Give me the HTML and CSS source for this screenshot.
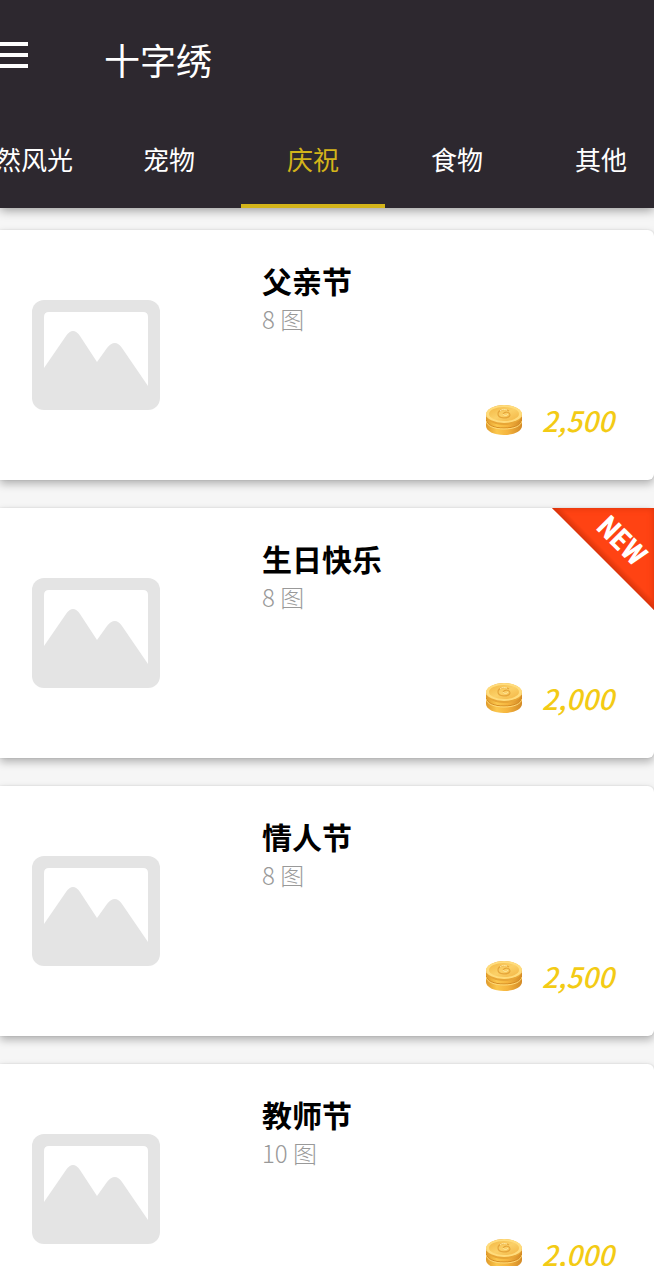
FILE: index.html
```html
<!DOCTYPE html>
<html lang="zh-CN">
<head>
    <meta charset="UTF-8">
    <meta name="viewport" content="width=device-width, initial-scale=1">
    <title>十字绣</title>
    <link rel="stylesheet" href="styles.css">
</head>
<body>
    <!-- shared icons -->
    <svg class="sprite" aria-hidden="true">
        <defs>
            <linearGradient id="coinSide" x1="0" x2="1" y1="0" y2="0">
                <stop offset="0" stop-color="#e09a2a"/>
                <stop offset="0.3" stop-color="#fbc74d"/>
                <stop offset="0.6" stop-color="#f5b43e"/>
                <stop offset="1" stop-color="#d38a26"/>
            </linearGradient>
            <linearGradient id="coinTop" x1="0" x2="1" y1="0" y2="1">
                <stop offset="0" stop-color="#f3b845"/>
                <stop offset="0.5" stop-color="#fbd067"/>
                <stop offset="1" stop-color="#f3b544"/>
            </linearGradient>
        </defs>
        <symbol id="picture" viewBox="0 0 128 110">
            <rect width="128" height="110" rx="12" fill="#e4e4e4"/>
            <path d="M12 68V17q0-5 5-5h94q5 0 5 5v69L90 48q-7-10-15 0L65 62 48 36q-7-10-14 0z" fill="#fff"/>
        </symbol>
        <symbol id="coins" viewBox="0 0 36 30">
            <path d="M0 12v9c0 5 8 9 18 9s18-4 18-9v-9z" fill="url(#coinSide)"/>
            <path d="M0 15c1 5 8 8 18 8s17-3 18-8" fill="none" stroke="#d48a22" stroke-width="1"/>
            <path d="M0 16c1 5 8 8 18 8s17-3 18-8" fill="none" stroke="#ffda79" stroke-width="1"/>
            <ellipse cx="18" cy="10" rx="18" ry="10" fill="#e8a636"/>
            <ellipse cx="18" cy="9" rx="18" ry="9" fill="#ffdc7c"/>
            <ellipse cx="18" cy="9" rx="15" ry="7" fill="url(#coinTop)"/>
            <path d="M23 6c-4-3-11-1-11 3 0 5 11 5 12 1 0-3-5-4-7-1" fill="none" stroke="#e5a53a" stroke-width="1.2"/>
            <path d="M14 6c2-2 5-2 7-1M17 9c1 2 4 2 5 0" fill="none" stroke="#ffe9a0" stroke-width="1"/>
        </symbol>
    </svg>

    <header class="header">
        <div class="toolbar">
            <button class="menu-button" type="button" aria-label="菜单">
                <span></span>
                <span></span>
                <span></span>
            </button>
            <h1>十字绣</h1>
        </div>
        <nav class="tabs">
            <a class="tab" href="#nature">自然风光</a>
            <a class="tab" href="#pets">宠物</a>
            <a class="tab active" href="#celebrate" aria-current="page">庆祝</a>
            <a class="tab" href="#food">食物</a>
            <a class="tab" href="#other">其他</a>
        </nav>
    </header>

    <main class="list">
        <article class="card">
            <svg class="thumb" aria-hidden="true"><use href="#picture"/></svg>
            <div class="info">
                <h2>父亲节</h2>
                <p class="count">8 图</p>
                <p class="price"><svg class="coins" aria-hidden="true"><use href="#coins"/></svg>2,500</p>
            </div>
        </article>

        <article class="card">
            <svg class="thumb" aria-hidden="true"><use href="#picture"/></svg>
            <div class="info">
                <h2>生日快乐</h2>
                <p class="count">8 图</p>
                <p class="price"><svg class="coins" aria-hidden="true"><use href="#coins"/></svg>2,000</p>
            </div>
            <div class="ribbon"><span>NEW</span></div>
        </article>

        <article class="card">
            <svg class="thumb" aria-hidden="true"><use href="#picture"/></svg>
            <div class="info">
                <h2>情人节</h2>
                <p class="count">8 图</p>
                <p class="price"><svg class="coins" aria-hidden="true"><use href="#coins"/></svg>2,500</p>
            </div>
        </article>

        <article class="card">
            <svg class="thumb" aria-hidden="true"><use href="#picture"/></svg>
            <div class="info">
                <h2>教师节</h2>
                <p class="count">10 图</p>
                <p class="price"><svg class="coins" aria-hidden="true"><use href="#coins"/></svg>2,000</p>
            </div>
        </article>
    </main>
</body>
</html>
```
FILE: styles.css
```css
* {
    box-sizing: border-box;
}

body {
    margin: 0;
    height: 100vh;
    display: flex;
    flex-direction: column;
    overflow: hidden;
    background: #f6f6f6;
    color: #000;
    font-family: "Noto Sans CJK SC", sans-serif;
}

h1, h2, p {
    margin: 0;
}

.sprite {
    position: absolute;
    width: 0;
    height: 0;
}

.header {
    position: relative;
    z-index: 1;
    flex: none;
    background: #2d282f;
    color: #fff;
    box-shadow: 0 2px 10px rgba(0, 0, 0, 0.4);
}

.toolbar {
    display: flex;
    align-items: center;
    gap: 76px;
    height: 110px;
}

.menu-button {
    display: flex;
    flex-direction: column;
    gap: 7px;
    width: 28px;
    padding: 0;
    border: 0;
    background: none;
    cursor: pointer;
}

.menu-button span {
    height: 4px;
    background: #fff;
}

h1 {
    padding-top: 8px;
    font-size: 36px;
    font-weight: 400;
    line-height: 48px;
}

/* the strip is scrolled a little to the right */
.tabs {
    display: flex;
    margin-left: -55px;
    overflow: hidden;
}

.tab {
    flex: none;
    min-width: 144px;
    height: 98px;
    padding: 0 24px;
    border-bottom: 4px solid transparent;
    color: #fff;
    font-size: 26px;
    font-weight: 400;
    line-height: 98px;
    text-align: center;
    text-decoration: none;
}

.tab.active {
    border-color: #d3b41a;
    color: #d3b41a;
}

.list {
    flex: 1;
    display: flex;
    flex-direction: column;
    gap: 28px;
    padding: 22px 0;
    overflow-y: auto;
    scrollbar-width: none;
}

.card {
    position: relative;
    flex: none;
    display: flex;
    align-items: center;
    gap: 102px;
    padding: 30px 40px 40px 32px;
    background: #fff;
    border-radius: 0 6px 6px 0;
    box-shadow: 0 4px 8px rgba(0, 0, 0, 0.28), 0 0 2px rgba(0, 0, 0, 0.12);
}

.thumb {
    flex: none;
    width: 128px;
    height: 110px;
    margin-top: 10px;
}

.info {
    flex: 1;
}

h2 {
    font-size: 30px;
    font-weight: 700;
    line-height: 40px;
}

.count {
    color: #999;
    font-size: 24px;
    font-weight: 300;
    line-height: 38px;
}

.price {
    display: flex;
    align-items: center;
    justify-content: flex-end;
    gap: 20px;
    margin-top: 62px;
    color: #f3cb15;
    font-size: 28px;
    font-style: italic;
    font-weight: 500;
    line-height: 40px;
}

.coins {
    width: 36px;
    height: 30px;
}

.ribbon {
    position: absolute;
    top: 0;
    right: 0;
    display: grid;
    place-items: center;
    width: 102px;
    height: 102px;
    padding: 0 0 36px 38px;
    background: linear-gradient(45deg, #ff4313 50%, #d9330b 50%, #ff4313 55%);
    box-shadow: inset 0 0 6px #d9330b;
    clip-path: polygon(0 0, 100% 0, 100% 100%);
}

.ribbon span {
    color: #fff;
    font-family: "Liberation Sans Narrow", "Roboto Condensed", "Liberation Sans", sans-serif;
    font-size: 30px;
    font-weight: 700;
    line-height: 30px;
    transform: rotate(45deg);
}
```
